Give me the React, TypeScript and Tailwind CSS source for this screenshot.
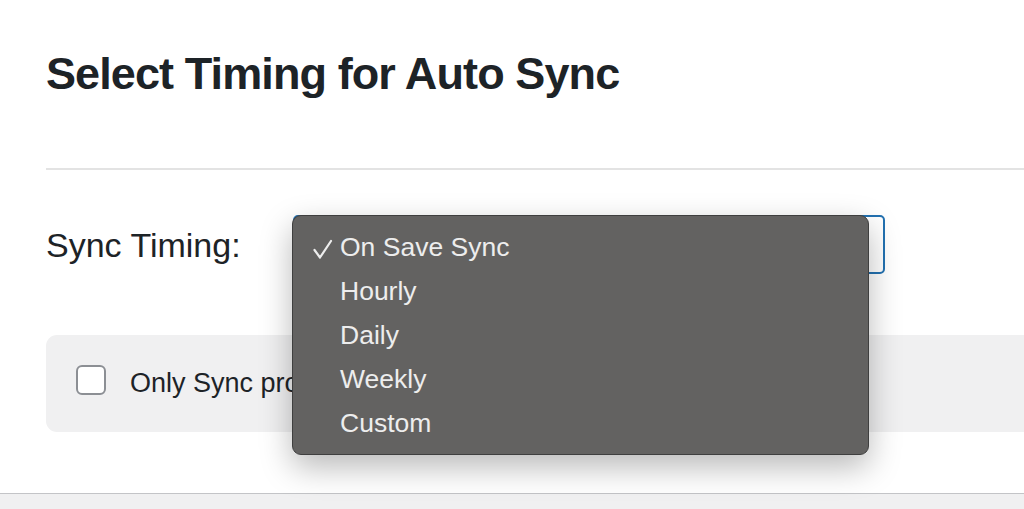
const font = { fontFamily: '"Liberation Sans", Arial, sans-serif' };

const options = ['On Save Sync', 'Hourly', 'Daily', 'Weekly', 'Custom'];

function CheckMark() {
  return (
    <svg className="absolute left-[20px] top-[13px]" width="20" height="20" viewBox="0 0 20 20" fill="none">
      <path d="M1.5 11 L7 18.5 L18 2" stroke="#ededed" strokeWidth="2.2" strokeLinecap="round" strokeLinejoin="round" />
    </svg>
  );
}

function SyncMenu() {
  return (
    <div className="absolute left-[-1px] top-0 z-20 w-[577px] rounded-[9px] border border-[#3f3f3f] bg-[#636261] pt-[10px] pb-[8px] shadow-[0_12px_32px_rgba(0,0,0,0.28)]">
      {options.map((opt, i) => (
        <div key={opt} className="relative flex h-[44px] items-center pl-[47px] text-[26.5px] text-[#ededed]">
          {i === 0 && <CheckMark />}
          {opt}
        </div>
      ))}
    </div>
  );
}

export default function App() {
  return (
    <div className="h-[509px] w-[1024px] overflow-hidden bg-white text-[#1d2327]" style={font}>
      <div className="pl-[46px]">
        {/* ── Title */}
        <h1 className="pt-[51px] text-[45px] font-bold leading-none tracking-[-0.9px]">
          Select Timing for Auto Sync
        </h1>

        {/* ── Divider */}
        <div className="mt-[72px] h-[2px] bg-[#e3e3e3]" />

        {/* ── Sync timing row */}
        <div className="mt-[45px] flex items-center">
          <label className="w-[247px] text-[34px] leading-none">Sync Timing:</label>
          <div className="relative">
            <div className="h-[59px] w-[592px] rounded-[5px] border-2 border-[#2271b1] bg-white" />
            <SyncMenu />
          </div>
        </div>

        {/* ── Option box (label runs under the open menu) */}
        <div className="mt-[61px] flex h-[97px] items-center rounded-l-[11px] bg-[#f0f0f1] pl-[30px]">
          <span className="mb-[8px] h-[30px] w-[30px] shrink-0 rounded-[6px] border-2 border-[#8c8f94] bg-white" />
          <span className="ml-[24px] w-[162px] overflow-hidden whitespace-nowrap text-[27px]">
            Only Sync products that are published
          </span>
        </div>
      </div>

      {/* ── Footer strip */}
      <div className="mt-[61px] h-[20px] border-t border-[#c3c4c7] bg-[#f0f0f1]" />
    </div>
  );
}
